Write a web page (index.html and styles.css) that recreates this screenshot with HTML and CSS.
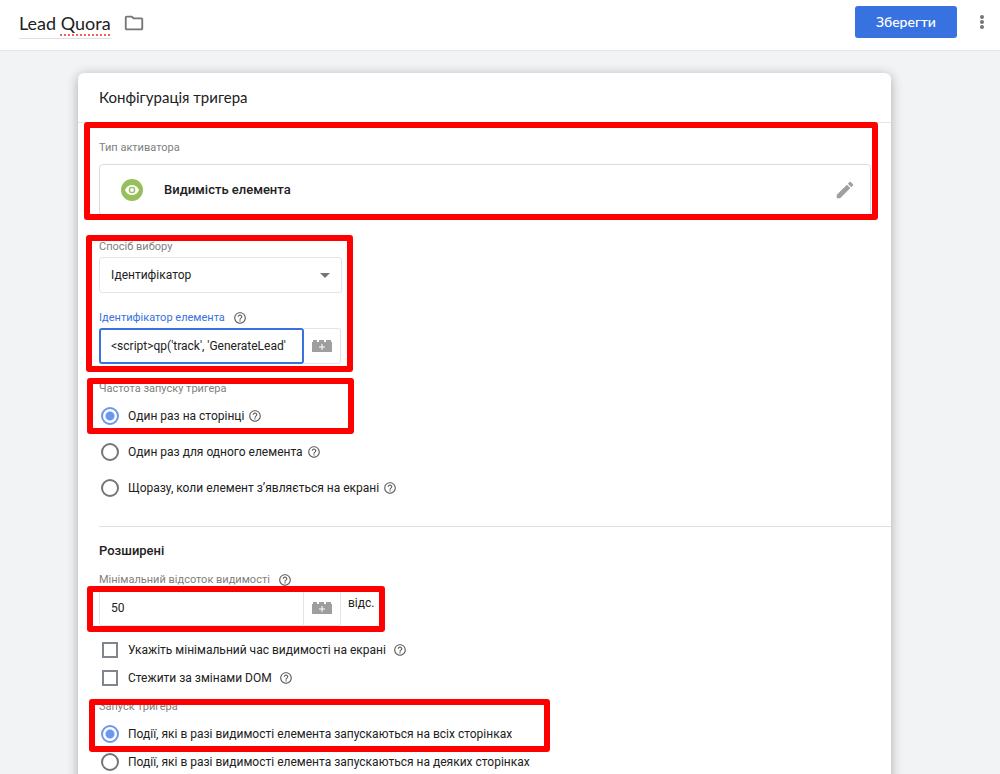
FILE: index.html
```html
<!DOCTYPE html>
<html lang="uk">
<head>
    <meta charset="UTF-8">
    <meta name="viewport" content="width=device-width, initial-scale=1">
    <title>Lead Quora</title>
    <link rel="stylesheet" href="styles.css">
</head>
<body>
    <svg class="sprite" aria-hidden="true">
        <symbol id="help" viewBox="0 0 24 24">
            <path d="M11 18h2v-2h-2v2zm1-16C6.48 2 2 6.48 2 12s4.480 10 10 10 10-4.480 10-10S17.520 2 12 2zm0 18c-4.410 0-8-3.590-8-8s3.590-8 8-8 8 3.590 8 8-3.590 8-8 8zm0-14c-2.210 0-4 1.790-4 4h2c0-1.100.9-2 2-2s2 .9 2 2c0 2-3 1.750-3 5h2c0-2.250 3-2.500 3-5 0-2.210-1.790-4-4-4z"/>
        </symbol>
        <symbol id="brick" viewBox="0 0 20 12">
            <path d="M0 2h1V0h4v2h2V0h5v2h2V0h5v2h1v10H0z"/>
            <path d="M10 4v6M7 7h6" stroke="#fff" stroke-width="1"/>
        </symbol>
    </svg>

    <header class="topbar">
        <h1 class="name">Lead <span class="typo">Quora</span></h1>
        <button class="icon-btn folder" type="button" aria-label="Папка">
            <svg width="22" height="22" viewBox="0 0 24 24"><path d="M9.170 6l2 2H20v10H4V6h5.170M10 4H4c-1.100 0-1.990.9-1.990 2L2 18c0 1.100.9 2 2 2h16c1.100 0 2-.9 2-2V8c0-1.100-.9-2-2-2h-8l-2-2z"/></svg>
        </button>
        <button class="save" type="button">Зберегти</button>
        <button class="icon-btn more" type="button" aria-label="Більше">
            <svg width="20" height="20" viewBox="0 0 20 20"><circle cx="10" cy="5" r="2"/><circle cx="10" cy="10" r="2"/><circle cx="10" cy="15" r="2"/></svg>
        </button>
    </header>

    <main class="page">
        <form class="card">
            <h2 class="card-title">Конфігурація тригера</h2>

            <section class="section">
                <div class="mark mark-type">
                    <p class="label">Тип активатора</p>
                    <div class="type-box">
                        <svg class="type-icon" width="22" height="22" viewBox="0 0 22 22">
                            <circle cx="11" cy="11" r="11" fill="#97c05c"/>
                            <path d="M11 6C7.700 6 5.200 8 4 11c1.200 3 3.700 5 7 5s5.800-2 7-5c-1.200-3-3.700-5-7-5z" fill="#fff"/>
                            <circle cx="11" cy="11" r="2.600" fill="#fff" stroke="#97c05c" stroke-width="1.400"/>
                        </svg>
                        <span class="type-name">Видимість елемента</span>
                        <button class="icon-btn edit" type="button" aria-label="Редагувати">
                            <svg width="22" height="22" viewBox="0 0 24 24"><path d="M3 17.250V21h3.750L17.810 9.940l-3.750-3.750L3 17.250zM20.710 7.040c.39-.39.39-1.020 0-1.410l-2.340-2.340c-.39-.39-1.020-.39-1.410 0l-1.830 1.830 3.750 3.750 1.830-1.830z"/></svg>
                        </button>
                    </div>
                </div>

                <div class="mark mark-method">
                    <label class="label" for="method">Спосіб вибору</label>
                    <select class="select" id="method">
                        <option>Ідентифікатор</option>
                    </select>
                    <div class="label label-active">
                        <label for="element-id">Ідентифікатор елемента</label>
                        <svg class="help"><use href="#help"/></svg>
                    </div>
                    <div class="field">
                        <input class="input active" id="element-id" type="text" value="&lt;script&gt;qp('track', 'GenerateLead'">
                        <button class="brick" type="button" aria-label="Вставити змінну"><svg width="20" height="12"><use href="#brick"/></svg></button>
                    </div>
                </div>

                <div class="mark mark-freq">
                    <p class="label">Частота запуску тригера</p>
                    <div class="option tall">
                        <input type="radio" name="freq" id="freq-page" checked>
                        <label for="freq-page">Один раз на сторінці</label>
                        <svg class="help"><use href="#help"/></svg>
                    </div>
                </div>
                <div class="option tall">
                    <input type="radio" name="freq" id="freq-element">
                    <label for="freq-element">Один раз для одного елемента</label>
                    <svg class="help"><use href="#help"/></svg>
                </div>
                <div class="option tall">
                    <input type="radio" name="freq" id="freq-every">
                    <label for="freq-every">Щоразу, коли елемент з’являється на екрані</label>
                    <svg class="help"><use href="#help"/></svg>
                </div>
            </section>

            <section class="section advanced">
                <h3 class="subtitle">Розширені</h3>
                <div class="label">
                    <label for="percent">Мінімальний відсоток видимості</label>
                    <svg class="help"><use href="#help"/></svg>
                </div>
                <div class="mark mark-percent">
                    <div class="field">
                        <input class="input" id="percent" type="text" value="50">
                        <button class="brick" type="button" aria-label="Вставити змінну"><svg width="20" height="12"><use href="#brick"/></svg></button>
                        <span class="unit">відс.</span>
                    </div>
                </div>
                <div class="checks">
                    <div class="option wide">
                        <input type="checkbox" id="min-time">
                        <label for="min-time">Укажіть мінімальний час видимості на екрані</label>
                        <svg class="help"><use href="#help"/></svg>
                    </div>
                    <div class="option wide">
                        <input type="checkbox" id="dom">
                        <label for="dom">Стежити за змінами DOM</label>
                        <svg class="help"><use href="#help"/></svg>
                    </div>
                </div>
                <div class="mark mark-fire">
                    <p class="label">Запуск тригера</p>
                    <div class="option">
                        <input type="radio" name="fire" id="fire-all" checked>
                        <label for="fire-all">Події, які в разі видимості елемента запускаються на всіх сторінках</label>
                    </div>
                </div>
                <div class="option">
                    <input type="radio" name="fire" id="fire-some">
                    <label for="fire-some">Події, які в разі видимості елемента запускаються на деяких сторінках</label>
                </div>
            </section>
        </form>
    </main>
</body>
</html>
```
FILE: styles.css
```css
*{
    margin:0;
    padding:0;
    box-sizing:border-box;
}
body{
    display:flex;
    flex-direction:column;
    height:100vh;
    overflow:hidden;
    background:#f1f3f4;
    color:#212121;
    font:12px/20px Roboto, "Noto Sans", sans-serif;
}
button, input, select{
    font:inherit;
    color:inherit;
}
svg{
    flex:none;
    fill:currentColor;
}
.sprite{
    position:absolute;
    width:0;
    height:0;
}

/* top bar */
.topbar{
    display:flex;
    flex:none;
    align-items:flex-start;
    height:51px;
    padding:6px 8px 0 19px;
    background:#fff;
    border-bottom:1px solid #e4e6e8;
}
.name{
    border-bottom:1px solid #e0e0e0;
    font:400 18px/29px Lato, Roboto, sans-serif;
    margin-top:3px;
}
.typo{
    text-decoration:underline dotted #f0655a 2px;
    text-underline-offset:4px;
    text-decoration-skip-ink:none;
}
.icon-btn{
    display:flex;
    border:0;
    background:none;
    color:#757575;
}
.folder{
    margin:6px 0 0 12px;
}
.save{
    width:102px;
    height:32px;
    margin-left:auto;
    border:0;
    border-radius:3px;
    background:#3871e0;
    color:#fff;
    font:500 14px/32px Lato, Roboto, sans-serif;
}
.more{
    margin:6px 0 0 15px;
}

/* card */
.page{
    flex:1;
    min-height:0;
    padding:22px 109px 0 78px;
    overflow:auto;
    scrollbar-width:none;
}
.card{
    padding-bottom:20px;
    background:#fff;
    border-radius:6px;
    box-shadow:0 2px 12px rgba(0,0,0,.3);
}
.card-title{
    padding:0 21px 1px;
    border-bottom:1px solid #e4e4e4;
    font:400 15px/48px Lato, Roboto, sans-serif;
}
.section{
    padding:17px 20px 20px 21px;
}
.label{
    display:flex;
    align-items:center;
    gap:8px;
    color:#808080;
    font-size:11px;
    line-height:16px;
}
.label-active{
    margin-top:17px;
    color:#3871e0;
}
.help{
    width:14px;
    height:14px;
    color:#616161;
}
.type-box{
    display:flex;
    align-items:center;
    height:52px;
    margin-top:8px;
    padding:0 14px 0 21px;
    border:1px solid #dcdcdc;
    border-radius:4px;
}
.type-name{
    margin-left:21px;
    font-size:13px;
    font-weight:500;
}
.edit{
    margin-left:auto;
    color:#a0a0a0;
}

/* fields */
.select, .input, .brick{
    height:36px;
    border:1px solid #e4e4e4;
    background:#fff;
}
.select{
    width:100%;
    margin-top:2px;
    padding:0 11px;
    border-radius:3px;
    appearance:none;
    background:#fff url("data:image/svg+xml,%3Csvg xmlns='http://www.w3.org/2000/svg' width='10' height='5'%3E%3Cpath d='M0 0h10L5 5z' fill='%23757575'/%3E%3C/svg%3E") no-repeat right 11px center;
}
.field{
    display:flex;
    margin-top:2px;
}
.input{
    width:205px;
    padding:0 9px 0 11px;
    border-radius:3px 0 0 3px;
    outline:0;
}
.active{
    padding:0 8px 0 10px;
    border:2px solid #3871e0;
    border-radius:3px;
}
.brick{
    display:flex;
    align-items:center;
    justify-content:center;
    width:37px;
    border-left:0;
    border-radius:0 3px 3px 0;
    color:#9e9e9e;
}
.unit{
    margin:3px 0 0 7px;
}

/* radios and checkboxes */
.option{
    display:flex;
    align-items:center;
    gap:9px;
    height:28px;
    padding-left:2px;
}
.option .help{
    margin-left:-5px;
}
.wide .help{
    margin-left:-2px;
}
.tall{
    height:36px;
}
input[type=radio], input[type=checkbox]{
    flex:none;
    width:18px;
    height:18px;
    border:2px solid #757575;
    background:#fff;
    appearance:none;
}
input[type=radio]{
    border-radius:50%;
}
input[type=radio]:checked{
    border-color:#6c96f2;
    background:radial-gradient(circle, #6c96f2 0 4px, #fff 5px);
}
input[type=checkbox]{
    width:16px;
    height:16px;
    margin:0 1px;
    border-color:#80868b;
}
.advanced{
    margin-left:21px;
    padding:14px 20px 0 0;
    border-top:1px solid #e0e0e0;
}
.subtitle{
    margin-bottom:11px;
    font-size:13px;
    font-weight:500;
}
.checks{
    margin:10px 0 7px;
}

/* red highlight frames */
.mark{
    position:relative;
}
.mark::after{
    content:"";
    position:absolute;
    border:6px solid #f00;
    border-radius:3px;
    pointer-events:none;
}
.mark-type::after{
    inset:-18px -7px -4px -15px;
}
.mark-method{
    width:243px;
    margin-top:23px;
}
.mark-method::after{
    inset:-4px -11px -8px -13px;
}
.mark-freq{
    width:243px;
    margin-top:17px;
}
.mark-freq .option{
    margin-top:1px;
}
.mark-freq::after{
    inset:-3px -12px 0 -12px;
}
.mark-percent{
    width:277px;
}
.mark-percent::after{
    inset:-4px -9px -6px -12px;
}
.mark-fire{
    width:429px;
}
.mark-fire .option{
    margin-top:5px;
}
.mark-fire::after{
    inset:0 -22px -4px -10px;
}
```
